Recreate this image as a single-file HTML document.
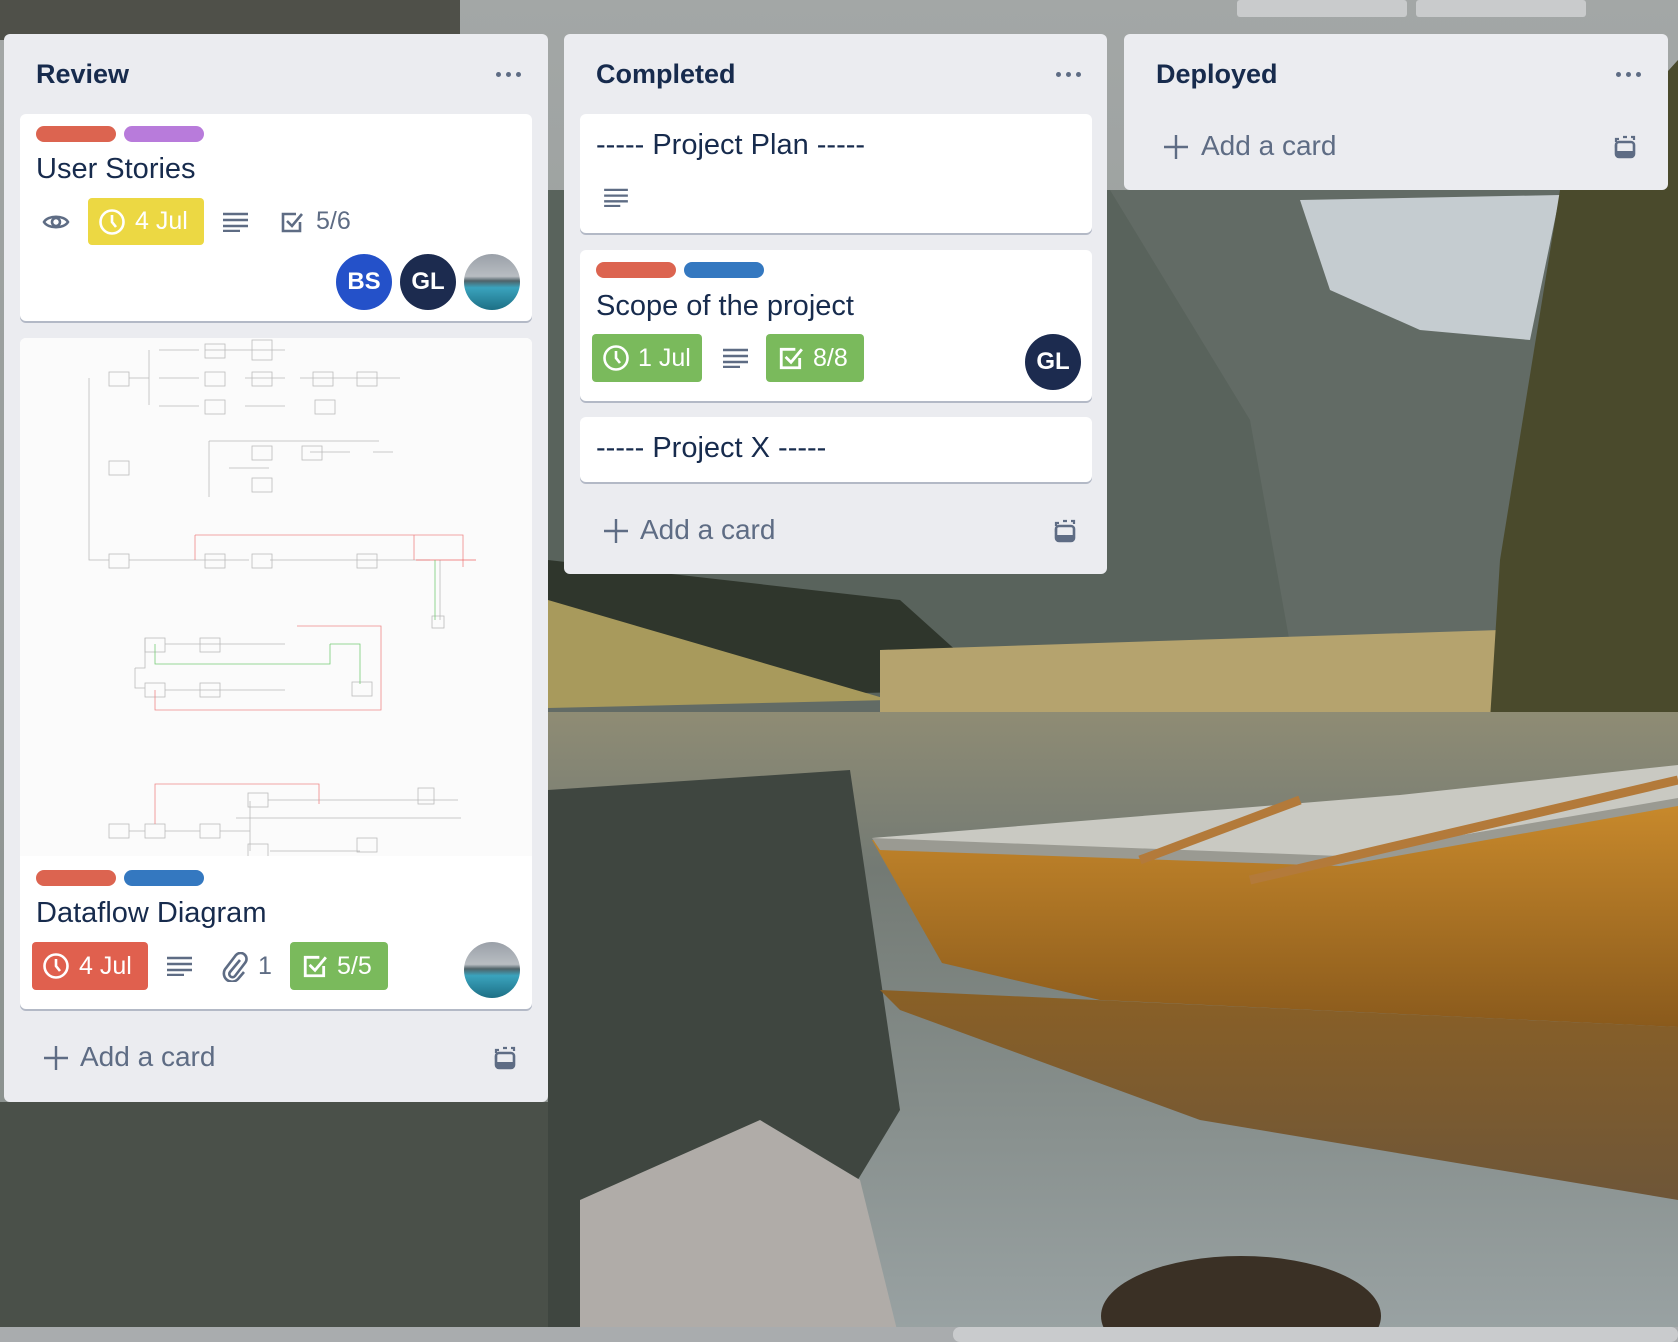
<!DOCTYPE html>
<html><head><meta charset="utf-8">
<style>
*{box-sizing:border-box;margin:0;padding:0}
body{width:1678px;height:1342px;overflow:hidden;position:relative;font-family:"Liberation Sans",sans-serif;color:#172b4d;background:#6b7270}
.abs{position:absolute}
.list{position:absolute;background:#ebecf0;border-radius:6px}
.lt{position:absolute;font-weight:bold;font-size:27px;color:#172b4d}
.dots{position:absolute;width:26px;height:6px}
.dots i{position:absolute;top:0;width:5px;height:5px;border-radius:50%;background:#5e6c84}
.card{position:absolute;background:#fff;border-radius:6px;box-shadow:0 2px 0 #b3b9c6}
.lab{position:absolute;height:16px;width:80px;border-radius:8px}
.ct{position:absolute;font-size:29px;color:#172b4d;white-space:nowrap}
.badge{position:absolute;border-radius:4px;color:#fff;font-size:25px;display:flex;align-items:center}
.av{position:absolute;border-radius:50%;color:#fff;font-weight:bold;font-size:24px;display:flex;align-items:center;justify-content:center}
.add{position:absolute;font-size:28px;color:#5e6c84;white-space:nowrap}
.g{color:#5e6c84;font-size:25px;position:absolute}
</style></head><body>
<svg class="abs" style="left:0;top:0" width="1678" height="1342" viewBox="0 0 1678 1342">
<defs>
<linearGradient id="sky" x1="0" y1="0" x2="0" y2="1"><stop offset="0" stop-color="#a3a7a6"/><stop offset="1" stop-color="#868d8a"/></linearGradient>
<linearGradient id="lake" x1="0" y1="0" x2="0" y2="1"><stop offset="0" stop-color="#8f8c74"/><stop offset="0.25" stop-color="#737a74"/><stop offset="1" stop-color="#9aa3a4"/></linearGradient>
<linearGradient id="boat" x1="0" y1="0" x2="0" y2="1"><stop offset="0" stop-color="#c98a2c"/><stop offset="1" stop-color="#8a5a1c"/></linearGradient>
<linearGradient id="refl" x1="0" y1="0" x2="0" y2="1"><stop offset="0" stop-color="#8a6026"/><stop offset="1" stop-color="#6e5638"/></linearGradient>
</defs>
<rect width="1678" height="1342" fill="url(#sky)"/>
<rect x="0" y="0" width="460" height="40" fill="#4f5049"/>
<rect x="548" y="190" width="1130" height="530" fill="#626b65"/>
<polygon points="548,190 1110,190 1250,420 1300,700 548,700" fill="#59635c"/>
<polygon points="1300,200 1560,195 1530,340 1420,330 1330,290" fill="#c5ccd0"/>
<polygon points="548,560 900,600 1000,690 548,700" fill="#2f362c"/>
<polygon points="548,600 890,700 548,708" fill="#a89a5c"/>
<polygon points="880,650 1500,630 1500,712 880,712" fill="#b5a36e"/>
<polygon points="1560,190 1678,60 1678,830 1540,780 1490,720 1500,560" fill="#4a4a2c"/>
<rect x="548" y="712" width="1130" height="630" fill="url(#lake)"/>
<polygon points="548,790 850,770 900,1110 760,1342 548,1342" fill="#3f4640"/>
<rect x="0" y="1102" width="548" height="240" fill="#4a5049"/>
<polygon points="580,1200 760,1120 860,1180 900,1342 580,1342" fill="#b0aca8"/>
<polygon points="872,838 1400,795 1678,765 1678,800 1340,855 1150,880 900,850" fill="#c9c9c2"/>
<polygon points="872,840 1340,858 1678,800 1678,1027 1100,1000 942,963" fill="url(#boat)"/>
<polygon points="872,838 1340,856 1678,798 1678,806 1340,866 880,850" fill="#9a9a92"/>
<polygon points="880,990 1678,1027 1678,1200 1200,1120 900,1010" fill="url(#refl)"/>
<line x1="1140" y1="860" x2="1300" y2="800" stroke="#b37a3a" stroke-width="9"/>
<line x1="1250" y1="880" x2="1678" y2="780" stroke="#b37a3a" stroke-width="9"/>
<ellipse cx="1241" cy="1316" rx="140" ry="60" fill="#3a3025"/>
<rect x="1237" y="0" width="170" height="17" rx="3" fill="#c9cbcc"/>
<rect x="1416" y="0" width="170" height="17" rx="3" fill="#c9cbcc"/>
<rect x="0" y="1327" width="1678" height="15" fill="#a9acae"/>
<rect x="953" y="1327" width="725" height="15" rx="7" fill="#c9cbcd"/>
</svg>

<!-- Review list -->
<div class="list" style="left:4px;top:34px;width:544px;height:1068px">
  <div class="lt" style="left:32px;top:25px">Review</div>
  <div class="dots" style="left:492px;top:38px"><i style="left:0"></i><i style="left:10px"></i><i style="left:20px"></i></div>
</div>
<div class="card" style="left:20px;top:114px;width:512px;height:207px">
  <div class="lab" style="left:16px;top:12px;background:#dc6450"></div>
  <div class="lab" style="left:104px;top:12px;background:#b87bdb"></div>
  <div class="ct" style="left:16px;top:39px">User Stories</div>
  <svg class="abs" style="left:22px;top:98px" width="28" height="20" viewBox="0 0 28 20"><path d="M2 10C6 3 22 3 26 10C22 17 6 17 2 10Z" fill="none" stroke="#5e6c84" stroke-width="2.6"/><circle cx="14" cy="10" r="4" fill="none" stroke="#5e6c84" stroke-width="2.6"/></svg>
  <div class="badge" style="left:68px;top:84px;width:116px;height:47px;background:#ecd843">
    <svg style="margin-left:10px" width="28" height="28" viewBox="0 0 28 28"><circle cx="14" cy="14" r="11.5" fill="none" stroke="#fff" stroke-width="2.6"/><path d="M14 7v7l4 5" fill="none" stroke="#fff" stroke-width="2.6"/></svg>
    <span style="margin-left:9px">4 Jul</span></div>
  <svg class="abs" style="left:203px;top:98px" width="25" height="20" viewBox="0 0 25 20"><path d="M0 2h25M0 8h25M0 14h25M0 19h17" stroke="#5e6c84" stroke-width="2.4"/></svg>
  <svg class="abs" style="left:260px;top:96px" width="24" height="24" viewBox="0 0 24 24"><path d="M20 12v9H3V4h13" fill="none" stroke="#5e6c84" stroke-width="2.6"/><path d="M7 11l5 5 10-12" fill="none" stroke="#5e6c84" stroke-width="2.6"/></svg>
  <div class="g" style="left:296px;top:93px">5/6</div>
  <div class="av" style="left:316px;top:140px;width:56px;height:56px;background:#2451c9">BS</div>
  <div class="av" style="left:380px;top:140px;width:56px;height:56px;background:#1c2b4f">GL</div>
  <div class="av" style="left:444px;top:140px;width:56px;height:56px;background:linear-gradient(#9aa0a8 0%,#b8bdc2 40%,#4f6268 48%,#3aa3bd 60%,#1d6f85 100%)"></div>
</div>

<div class="card" style="left:20px;top:338px;width:512px;height:671px">
  <div class="abs" style="left:0;top:0;width:512px;height:518px;background:#fbfbfb;border-radius:6px 6px 0 0"></div>
  <svg class="abs" style="left:43px;top:0" width="427" height="518" viewBox="43 0 427 518" fill="none" stroke="#bbb" stroke-width="0.8">
    <rect x="89" y="34" width="20" height="14"/><rect x="89" y="123" width="20" height="14"/><rect x="89" y="216" width="20" height="14"/>
    <path d="M69 40v182h20M109 40h20M109 222h20M129 12v55M139 12h40M139 40h40M139 68h40M185 12h40M225 12h40M225 40h40M225 68h40M280 40h40M320 40h40M360 40h20M189 103h170M189 103v56M209 130h40M290 114h40M353 114h20"/>
    <rect x="185" y="6" width="20" height="14"/><rect x="185" y="34" width="20" height="14"/><rect x="185" y="62" width="20" height="14"/>
    <rect x="232" y="2" width="20" height="20"/><rect x="232" y="34" width="20" height="14"/><rect x="293" y="34" width="20" height="14"/><rect x="337" y="34" width="20" height="14"/><rect x="295" y="62" width="20" height="14"/>
    <rect x="232" y="108" width="20" height="14"/><rect x="282" y="108" width="20" height="14"/><rect x="232" y="140" width="20" height="14"/>
    <rect x="185" y="216" width="20" height="14"/><rect x="232" y="216" width="20" height="14"/><rect x="337" y="216" width="20" height="14"/><rect x="412" y="278" width="12" height="12"/>
    <path d="M129 222h100M250 222h160M420 222v60"/>
    <rect x="125" y="300" width="20" height="14"/><rect x="180" y="300" width="20" height="14"/><rect x="125" y="345" width="20" height="14"/><rect x="180" y="345" width="20" height="14"/><rect x="332" y="344" width="20" height="14"/>
    <path d="M115 330h10v-30M115 330v20h10M145 306h120M145 352h120"/>
    <rect x="89" y="486" width="20" height="14"/><rect x="125" y="486" width="20" height="14"/><rect x="180" y="486" width="20" height="14"/><rect x="228" y="455" width="20" height="14"/><rect x="228" y="506" width="20" height="14"/><rect x="337" y="500" width="20" height="14"/><rect x="398" y="450" width="16" height="16"/>
    <path d="M109 493h16M145 493h35M200 493h30v-30M230 493v20M248 462h190M250 513h90M216 480h225"/>
    <path d="M175 197h268v32M175 197v25M394 197v25" stroke="#e88"/>
    <path d="M396 222h60" stroke="#e66"/>
    <path d="M415 222v60" stroke="#7c7"/>
    <path d="M135 306v20h175v-20M310 306h30v40" stroke="#7c7"/>
    <path d="M135 352v20h226v-84h-84" stroke="#e88"/>
    <path d="M135 486v-40h164v20" stroke="#e88"/>
  </svg>
  <div class="lab" style="left:16px;top:532px;background:#dc6450"></div>
  <div class="lab" style="left:104px;top:532px;background:#3478c0"></div>
  <div class="ct" style="left:16px;top:559px">Dataflow Diagram</div>
  <div class="badge" style="left:12px;top:604px;width:116px;height:48px;background:#e0604e">
    <svg style="margin-left:10px" width="28" height="28" viewBox="0 0 28 28"><circle cx="14" cy="14" r="11.5" fill="none" stroke="#fff" stroke-width="2.6"/><path d="M14 7v7l4 5" fill="none" stroke="#fff" stroke-width="2.6"/></svg>
    <span style="margin-left:9px">4 Jul</span></div>
  <svg class="abs" style="left:147px;top:618px" width="25" height="20" viewBox="0 0 25 20"><path d="M0 2h25M0 8h25M0 14h25M0 19h17" stroke="#5e6c84" stroke-width="2.4"/></svg>
  <svg class="abs" style="left:202px;top:614px" width="26" height="30" viewBox="0 0 26 30"><path d="M18 8L8 20a3 3 0 0 0 5 4L23 11a6 6 0 0 0-9-8L4 16a8 8 0 0 0 12 11l6-7" fill="none" stroke="#5e6c84" stroke-width="2.6"/></svg>
  <div class="g" style="left:238px;top:614px">1</div>
  <div class="badge" style="left:270px;top:604px;width:98px;height:48px;background:#7aba5c">
    <svg style="margin-left:12px" width="26" height="26" viewBox="0 0 24 24"><path d="M20 12v9H3V4h13" fill="none" stroke="#fff" stroke-width="2.6"/><path d="M7 11l5 5 10-12" fill="none" stroke="#fff" stroke-width="2.6"/></svg>
    <span style="margin-left:9px">5/5</span></div>
  <div class="av" style="left:444px;top:604px;width:56px;height:56px;background:linear-gradient(#9aa0a8 0%,#b8bdc2 40%,#4f6268 48%,#3aa3bd 60%,#1d6f85 100%)"></div>
</div>
<svg class="abs" style="left:44px;top:1046px" width="24" height="24" viewBox="0 0 24 24"><path d="M12 0v24M0 12h24" stroke="#5e6c84" stroke-width="2.4"/></svg>
<div class="add" style="left:80px;top:1041px">Add a card</div>
<svg class="abs" style="left:493px;top:1046px" width="24" height="24" viewBox="0 0 24 24"><path d="M3 7V4h3M10 2h4M18 2h3v3M3 10v3" fill="none" stroke="#5e6c84" stroke-width="2.2"/><rect x="3" y="7" width="18" height="15" rx="3" fill="none" stroke="#5e6c84" stroke-width="2.6"/><rect x="4" y="16" width="16" height="5" fill="#5e6c84"/></svg>

<!-- Completed list -->
<div class="list" style="left:564px;top:34px;width:543px;height:540px">
  <div class="lt" style="left:32px;top:25px">Completed</div>
  <div class="dots" style="left:492px;top:38px"><i style="left:0"></i><i style="left:10px"></i><i style="left:20px"></i></div>
</div>
<div class="card" style="left:580px;top:114px;width:512px;height:119px">
  <div class="ct" style="left:16px;top:15px">----- Project Plan -----</div>
  <svg class="abs" style="left:24px;top:74px" width="24" height="19" viewBox="0 0 25 20"><path d="M0 2h25M0 8h25M0 14h25M0 19h17" stroke="#5e6c84" stroke-width="2.4"/></svg>
</div>
<div class="card" style="left:580px;top:250px;width:512px;height:151px">
  <div class="lab" style="left:16px;top:12px;background:#dc6450"></div>
  <div class="lab" style="left:104px;top:12px;background:#3478c0"></div>
  <div class="ct" style="left:16px;top:40px">Scope of the project</div>
  <div class="badge" style="left:12px;top:84px;width:110px;height:48px;background:#7aba5c">
    <svg style="margin-left:10px" width="28" height="28" viewBox="0 0 28 28"><circle cx="14" cy="14" r="11.5" fill="none" stroke="#fff" stroke-width="2.6"/><path d="M14 7v7l4 5" fill="none" stroke="#fff" stroke-width="2.6"/></svg>
    <span style="margin-left:8px">1 Jul</span></div>
  <svg class="abs" style="left:143px;top:98px" width="25" height="20" viewBox="0 0 25 20"><path d="M0 2h25M0 8h25M0 14h25M0 19h17" stroke="#5e6c84" stroke-width="2.4"/></svg>
  <div class="badge" style="left:186px;top:84px;width:98px;height:48px;background:#7aba5c">
    <svg style="margin-left:12px" width="26" height="26" viewBox="0 0 24 24"><path d="M20 12v9H3V4h13" fill="none" stroke="#fff" stroke-width="2.6"/><path d="M7 11l5 5 10-12" fill="none" stroke="#fff" stroke-width="2.6"/></svg>
    <span style="margin-left:9px">8/8</span></div>
  <div class="av" style="left:445px;top:84px;width:56px;height:56px;background:#1c2b4f">GL</div>
</div>
<div class="card" style="left:580px;top:417px;width:512px;height:65px">
  <div class="ct" style="left:16px;top:15px">----- Project X -----</div>
</div>
<svg class="abs" style="left:604px;top:519px" width="24" height="24" viewBox="0 0 24 24"><path d="M12 0v24M0 12h24" stroke="#5e6c84" stroke-width="2.4"/></svg>
<div class="add" style="left:640px;top:514px">Add a card</div>
<svg class="abs" style="left:1053px;top:519px" width="24" height="24" viewBox="0 0 24 24"><path d="M3 7V4h3M10 2h4M18 2h3v3M3 10v3" fill="none" stroke="#5e6c84" stroke-width="2.2"/><rect x="3" y="7" width="18" height="15" rx="3" fill="none" stroke="#5e6c84" stroke-width="2.6"/><rect x="4" y="16" width="16" height="5" fill="#5e6c84"/></svg>

<!-- Deployed list -->
<div class="list" style="left:1124px;top:34px;width:544px;height:156px">
  <div class="lt" style="left:32px;top:25px">Deployed</div>
  <div class="dots" style="left:492px;top:38px"><i style="left:0"></i><i style="left:10px"></i><i style="left:20px"></i></div>
</div>
<svg class="abs" style="left:1164px;top:135px" width="24" height="24" viewBox="0 0 24 24"><path d="M12 0v24M0 12h24" stroke="#5e6c84" stroke-width="2.4"/></svg>
<div class="add" style="left:1201px;top:130px">Add a card</div>
<svg class="abs" style="left:1613px;top:135px" width="24" height="24" viewBox="0 0 24 24"><path d="M3 7V4h3M10 2h4M18 2h3v3M3 10v3" fill="none" stroke="#5e6c84" stroke-width="2.2"/><rect x="3" y="7" width="18" height="15" rx="3" fill="none" stroke="#5e6c84" stroke-width="2.6"/><rect x="4" y="16" width="16" height="5" fill="#5e6c84"/></svg>
</body></html>
